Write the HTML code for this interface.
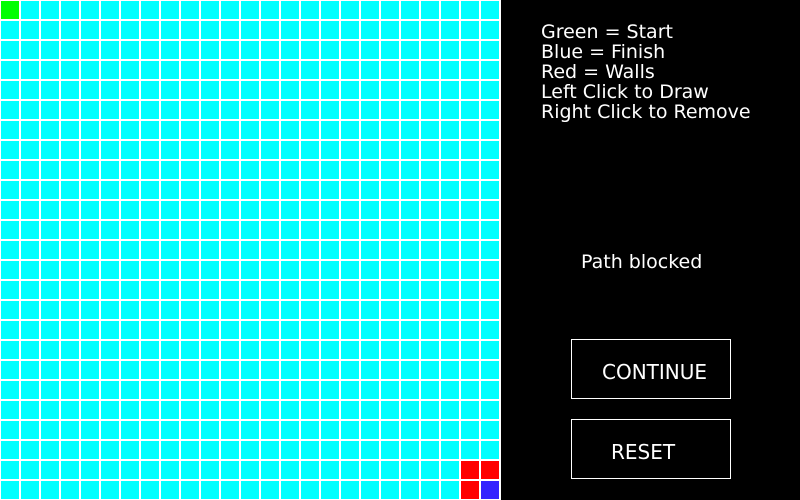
<!DOCTYPE html>
<html><head><style>
body{margin:0;width:800px;height:499px;background:#000;overflow:hidden;position:relative;font-family:"DejaVu Sans","Liberation Sans",sans-serif;color:#fff}
.grid{position:absolute;left:0;top:0;width:501px;height:500px;
background:
repeating-linear-gradient(90deg,#fff 0 1px,transparent 1px 19px,#fff 19px 20px),
#0ff;}
.h{position:absolute;left:0;top:0;width:501px;height:500px;background:repeating-linear-gradient(180deg,#fff 0 1px,transparent 1px 19px,#fff 19px 20px)}
.c{position:absolute;width:18px;height:18px}
.t{position:absolute;left:541px;top:22px;font-size:19px;line-height:20px;white-space:nowrap}
.b{position:absolute;left:571px;width:158px;height:58px;border:1px solid #fff}
.bt{position:absolute;font-size:19px;line-height:20px;white-space:nowrap}
</style></head><body>
<div class="grid"></div><div class="h"></div>
<div style="position:absolute;left:500px;top:0;width:1px;height:499px;background:#fff"></div>
<div class="c" style="left:1px;top:1px;background:#0f0"></div>
<div class="c" style="left:461px;top:461px;background:#f00"></div>
<div class="c" style="left:481px;top:461px;background:#f00"></div>
<div class="c" style="left:461px;top:481px;background:#f00"></div>
<div class="c" style="left:481px;top:481px;background:#3322ff"></div>
<div class="t">Green = Start<br>Blue = Finish<br>Red = Walls<br>Left Click to Draw<br>Right Click to Remove</div>
<div class="bt" style="left:581px;top:252px">Path blocked</div>
<div class="b" style="top:339px"></div>
<div class="bt" style="left:602px;top:362px;font-size:20px">CONTINUE</div>
<div class="b" style="top:419px"></div>
<div class="bt" style="left:611px;top:442px;font-size:20px">RESET</div>
</body></html>
